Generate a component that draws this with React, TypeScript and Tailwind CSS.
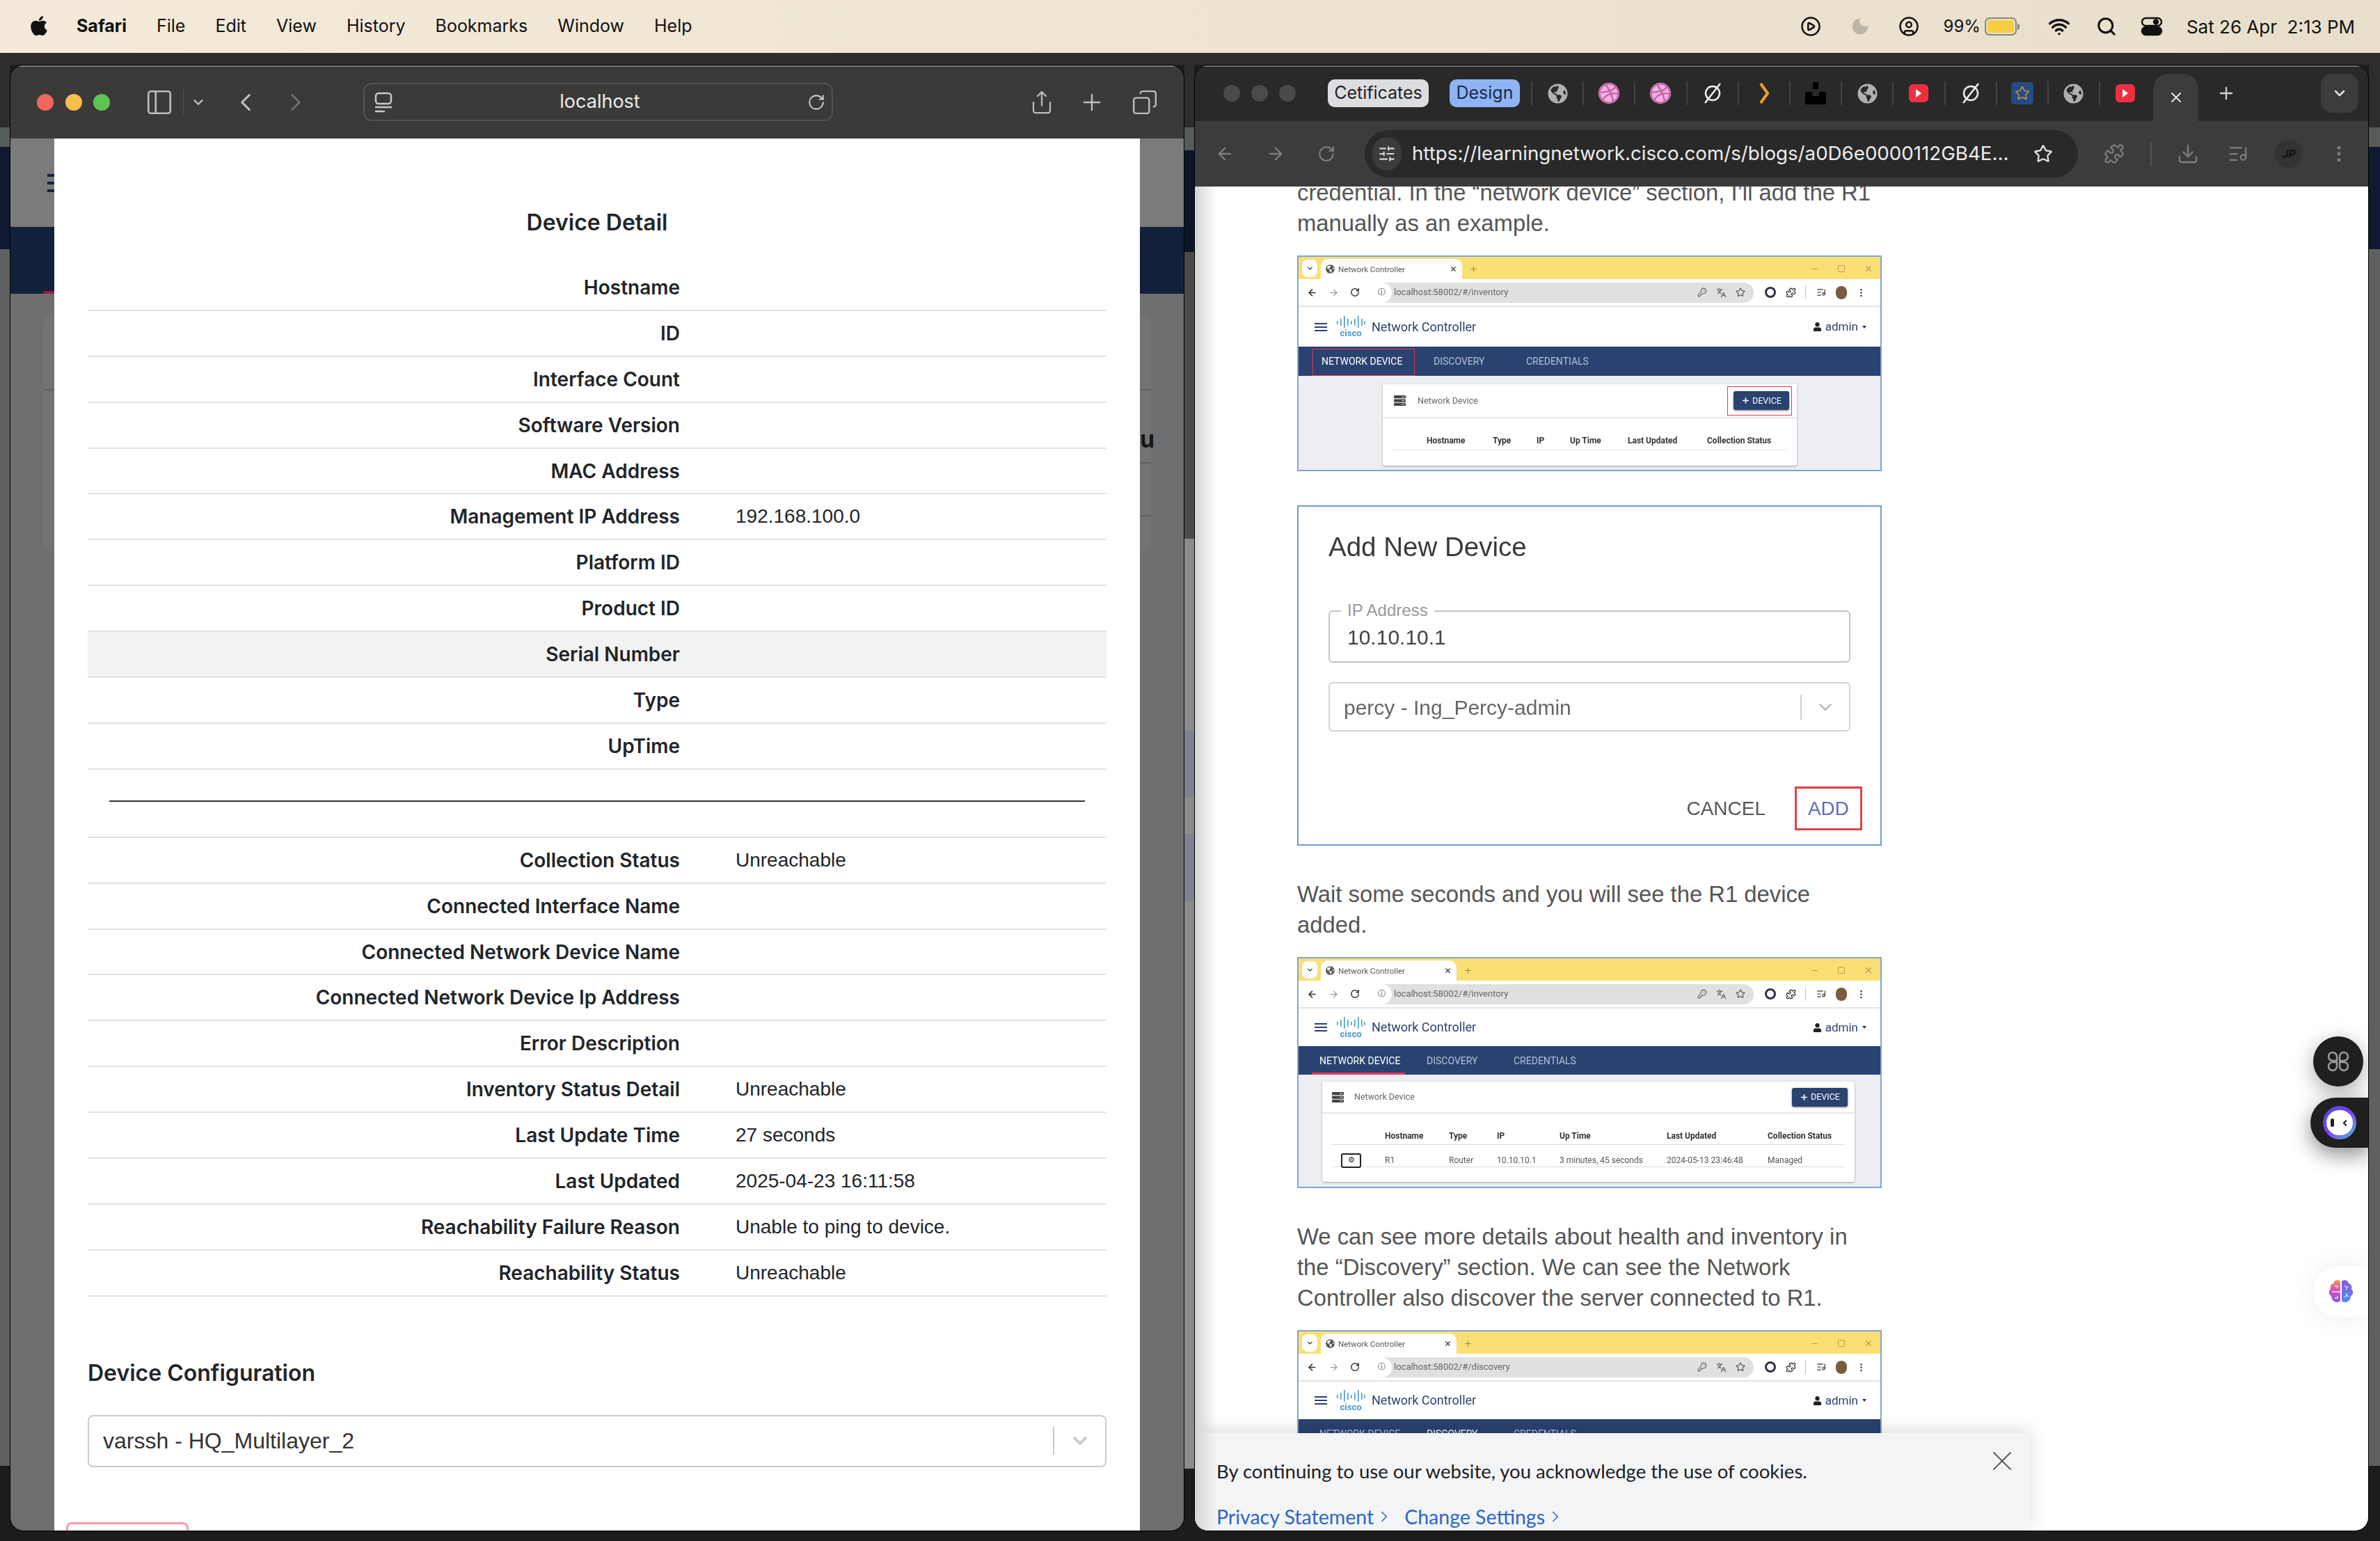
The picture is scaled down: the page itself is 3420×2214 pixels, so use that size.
import React from 'react';
import clsx from 'clsx';
import {
  ArrowLeft,
  ArrowRight,
  ChevronDown,
  ChevronLeft,
  ChevronRight,
  CirclePlay,
  CircleUser,
  Copy,
  Download,
  KeyRound,
  Languages,
  ListMusic,
  Minus,
  MoreVertical,
  PanelLeft,
  Plus,
  Puzzle,
  RotateCw,
  Search,
  Share,
  SlidersHorizontal,
  Square,
  Star,
  Wifi,
  X,
} from 'lucide-react';
import { FaApple, FaDribbble, FaGlobeAmericas, FaServer, FaUser } from 'react-icons/fa';

const topRows = [
  { label: 'Hostname' },
  { label: 'ID' },
  { label: 'Interface Count' },
  { label: 'Software Version' },
  { label: 'MAC Address' },
  { label: 'Management IP Address', value: '192.168.100.0' },
  { label: 'Platform ID' },
  { label: 'Product ID' },
  { label: 'Serial Number', highlight: true },
  { label: 'Type' },
  { label: 'UpTime' },
];

const bottomRows = [
  { label: 'Collection Status', value: 'Unreachable' },
  { label: 'Connected Interface Name' },
  { label: 'Connected Network Device Name' },
  { label: 'Connected Network Device Ip Address' },
  { label: 'Error Description' },
  { label: 'Inventory Status Detail', value: 'Unreachable' },
  { label: 'Last Update Time', value: '27 seconds' },
  { label: 'Last Updated', value: '2025-04-23 16:11:58' },
  { label: 'Reachability Failure Reason', value: 'Unable to ping to device.' },
  { label: 'Reachability Status', value: 'Unreachable' },
];

type RowProps = { label: string; value?: string; highlight?: boolean };

const DetailRow = ({ label, value, highlight }: RowProps) => (
  <div
    className={clsx(
      'flex h-[65.9px] items-center border-b-2 border-[#e2e2e2] text-[28px] text-[#212529]',
      highlight && 'bg-[#f2f2f2]',
    )}
  >
    <div className="w-[851px] text-right font-semibold">{label}</div>
    <div className="ml-[80px] font-['Liberation_Sans',sans-serif]">{value}</div>
  </div>
);

// the page behind the modal, seen left and right of it
const BackdropSide = ({ side }: { side: 'left' | 'right' }) => (
  <div className="flex w-[63px] shrink-0 flex-col">
    <div className="flex h-[127px] flex-col items-end gap-[7px] bg-[#7b7b7b] pt-[51px]">
      {side === 'left' && (
        <>
          <div className="h-[4px] w-[10px] bg-[#16233d]" />
          <div className="h-[4px] w-[10px] bg-[#16233d]" />
          <div className="h-[4px] w-[10px] bg-[#16233d]" />
        </>
      )}
    </div>
    <div className="flex h-[96px] items-end justify-end bg-[#13203a]">
      {side === 'left' && <div className="h-[4px] w-[16px] bg-[#8c1f3f]" />}
    </div>
    <div className="flex flex-1 flex-col bg-[#6d6e70] pt-[30px]">
      <div
        className={clsx(
          'h-[340px] w-[16px] bg-[#737373]',
          side === 'left' ? 'ml-auto rounded-l-[12px]' : 'rounded-r-[12px]',
        )}
      >
        <div className="h-[109px] border-b-2 border-[#5f5f5f]" />
        {side === 'right' && (
          <>
            <div className="h-[105px] border-b-2 border-[#5f5f5f] pt-[55px] text-[34px] leading-[30px] font-bold text-[#161616]">
              u
            </div>
            <div className="h-[76px] border-b-2 border-[#5f5f5f]" />
          </>
        )}
      </div>
    </div>
  </div>
);

const DeviceModal = () => (
  <div className="h-full w-[1560px] shrink-0 overflow-hidden bg-white px-[48px] pt-[99px]">
    <div className="h-[44px] text-center text-[32px] leading-[44px] font-semibold text-[#212529]">Device Detail</div>
    <div className="mt-[39px]">
      {topRows.map((row) => (
        <DetailRow key={row.label} {...row} />
      ))}
    </div>
    <div className="flex h-[98px] items-center border-b-2 border-[#e2e2e2] px-[31px]">
      <div className="mb-[6px] h-[2px] w-full bg-[#333]" />
    </div>
    {bottomRows.map((row) => (
      <DetailRow key={row.label} {...row} />
    ))}
    <div className="mt-[88px] h-[44px] text-[32px] leading-[44px] font-semibold text-[#212529]">Device Configuration</div>
    <div className="mt-[38px] flex h-[75px] items-center rounded-lg border-2 border-[#cccccc] pl-[20px] font-['Liberation_Sans',sans-serif] text-[32px] text-[#333]">
      <div className="flex-1">varssh - HQ_Multilayer_2</div>
      <div className="h-[40px] w-[2px] bg-[#cccccc]" />
      <div className="flex w-[73px] justify-center">
        <ChevronDown size={32} strokeWidth={3} className="text-[#cccccc]" />
      </div>
    </div>
    <div className="mt-[79px] -ml-[31px] h-[40px] w-[176px] rounded-lg border-[3px] border-[#f29cb0]" />
  </div>
);

const SafariWindow = () => (
  <div className="flex h-full w-[1688px] shrink-0 flex-col overflow-hidden rounded-[20px] border border-black">
    <div className="flex h-[105px] shrink-0 items-center bg-[#3b3a38] shadow-[inset_0_2px_0_#777]">
      <div className="ml-[38px] h-[24px] w-[24px] rounded-full bg-[#f0665c]" />
      <div className="ml-[17px] h-[24px] w-[24px] rounded-full bg-[#f6bd4f]" />
      <div className="ml-[16px] h-[24px] w-[24px] rounded-full bg-[#60c453]" />
      <PanelLeft size={42} strokeWidth={1.5} className="ml-[50px] text-[#bdbdbd]" />
      <div className="ml-[13px] h-[36px] w-px bg-[#555]" />
      <ChevronDown size={22} strokeWidth={2.5} className="ml-[10px] text-[#c4c4c4]" />
      <ChevronLeft size={42} strokeWidth={1.7} className="ml-[36px] text-[#c4c4c4]" />
      <ChevronRight size={42} strokeWidth={1.7} className="ml-[30px] text-[#6e6e6e]" />
      <div className="ml-[76px] flex h-[55px] w-[675px] items-center rounded-[12px] border-2 border-[#525252] pr-[9px] pl-[14px]">
        <svg width="26" height="30" viewBox="0 0 26 30" fill="none" stroke="#c8c8c8" strokeWidth="2.5" className="shrink-0">
          <rect x="2" y="2" width="22" height="15" rx="4" />
          <path d="M1 22h24M1 28h14" />
        </svg>
        <div className="flex-1 text-center text-[27px] text-[#ececec]">localhost</div>
        <RotateCw size={26} strokeWidth={1.7} className="shrink-0 text-[#cfcfcf]" />
      </div>
      <Share size={36} strokeWidth={1.5} className="ml-[282px] text-[#bdbdbd]" />
      <Plus size={38} strokeWidth={1.5} className="ml-[35px] text-[#bdbdbd]" />
      <Copy size={38} strokeWidth={1.5} className="ml-[38px] -scale-x-100 text-[#bdbdbd]" />
    </div>
    <div className="flex min-h-0 flex-1">
      <BackdropSide side="left" />
      <DeviceModal />
      <BackdropSide side="right" />
    </div>
  </div>
);

const CiscoLogo = () => (
  <div className="flex w-[42px] flex-col items-center">
    <svg width="42" height="20" viewBox="0 0 42 20" fill="#4a9ad4">
      <rect x="1" y="8" width="1.6" height="5" />
      <rect x="6" y="5" width="1.6" height="10" />
      <rect x="11" y="1" width="1.6" height="17" />
      <rect x="16" y="5" width="1.6" height="10" />
      <rect x="21" y="8" width="1.6" height="5" />
      <rect x="26" y="5" width="1.6" height="10" />
      <rect x="31" y="1" width="1.6" height="17" />
      <rect x="36" y="5" width="1.6" height="10" />
      <rect x="40" y="8" width="1.6" height="5" />
    </svg>
    <div className="-mt-[1px] text-[13px] leading-[14px] font-bold text-[#4a9ad4]">cisco</div>
  </div>
);

const DeviceButton = () => (
  <div className="flex h-[27px] w-[80px] items-center justify-center gap-[3px] rounded-[3px] bg-[#2a4270] text-[12.5px] text-white shadow-[0_1px_3px_rgba(0,0,0,0.5)]">
    <Plus size={13} strokeWidth={3} />
    DEVICE
  </div>
);

type ShotProps = {
  path: string;
  variant: 'first' | 'rest';
  active?: string;
  className: string;
  children?: React.ReactNode;
};

const navTabs = [
  { name: 'NETWORK DEVICE', first: 'w-[161px]', rest: 'w-[154px]' },
  { name: 'DISCOVERY', first: 'w-[133px]', rest: 'w-[125px]' },
  { name: 'CREDENTIALS', first: 'w-[100px]', rest: 'w-[100px]' },
];

// small pasted screenshot of the Network Controller app inside the blog post
const AppShot = ({ path, variant, active = 'NETWORK DEVICE', className, children }: ShotProps) => {
  const first = variant === 'first';
  return (
    <div className={clsx("flex w-[840px] flex-col overflow-hidden border-2 border-[#7fa5d6] bg-[#eceef2] font-['Roboto',sans-serif] blur-[0.4px]", className)}>
      <div className="flex h-[32px] shrink-0 items-end bg-[#fadf75]">
        <div className="mb-[3px] ml-[5px] flex h-[25px] w-[22px] items-center justify-center rounded-lg bg-white">
          <ChevronDown size={11} strokeWidth={3} className="text-[#333]" />
        </div>
        <div className={clsx('ml-[5px] flex h-[29px] items-center rounded-t-[10px] bg-white px-[7px] text-[11.5px] text-[#555]', first ? 'w-[203px]' : 'w-[195px]')}>
          <FaGlobeAmericas size={13} className="mr-[5px] text-[#555]" />
          <span className="flex-1">Network Controller</span>
          <X size={11} strokeWidth={2.5} className="text-[#333]" />
        </div>
        <Plus size={13} className="mb-[8px] ml-[10px] text-[#9b8a3a]" />
        <div className="mb-[8px] ml-auto flex items-center gap-[26px] pr-[10px] text-[#b3a04d]">
          <Minus size={13} />
          <Square size={12} />
          <X size={14} />
        </div>
      </div>
      <div className="flex h-[40px] shrink-0 items-center border-b-2 border-[#e4e4e4] bg-white pl-[12px] text-[#333]">
        <ArrowLeft size={15} strokeWidth={2.5} />
        <ArrowRight size={15} strokeWidth={2} className="ml-[16px] text-[#999]" />
        <RotateCw size={14} strokeWidth={2.5} className="ml-[16px]" />
        <div className="ml-[17px] flex h-[29px] w-[549px] items-center rounded-full bg-[#e0e0e0] pr-[12px] text-[13px] text-[#666]">
          <div className="flex h-[29px] w-[29px] items-center justify-center rounded-full bg-white text-[11px] text-[#333]">ⓘ</div>
          <span className="ml-[3px] flex-1">{path}</span>
          <KeyRound size={14} className="mr-[13px] text-[#666]" />
          <Languages size={15} className="mr-[13px] text-[#666]" />
          <Star size={14} className="text-[#555]" />
        </div>
        <div className="ml-[16px] h-[16px] w-[16px] rounded-full border-[3px] border-[#334]" />
        <Puzzle size={15} className="ml-[14px]" />
        <div className="ml-[13px] h-[20px] w-px bg-[#f0c14b]" />
        <ListMusic size={14} className="ml-[15px]" />
        <div className="ml-[14px] h-[19px] w-[16px] rounded-full bg-[#7a5c3d]" />
        <MoreVertical size={15} className="ml-[13px]" />
      </div>
      <div className={clsx('flex shrink-0 items-center bg-white pr-[20px] pl-[23px] text-[#2a4270]', first ? 'h-[57px]' : 'h-[54px]')}>
        <div className="flex w-[18px] flex-col gap-[3px]">
          <div className="h-[2px] bg-[#2a4270]" />
          <div className="h-[2px] bg-[#2a4270]" />
          <div className="h-[2px] bg-[#2a4270]" />
        </div>
        <div className="ml-[13px]">
          <CiscoLogo />
        </div>
        <div className="ml-[9px] text-[18px] leading-none">Network Controller</div>
        <FaUser size={13} className="ml-auto text-[#222]" />
        <div className="ml-[5px] text-[17px] leading-none">admin</div>
        <div className="ml-[6px] h-0 w-0 border-x-[3px] border-t-[4px] border-x-transparent border-t-[#333]" />
      </div>
      <div className={clsx('flex shrink-0 items-center bg-[#2a4270] text-[14px]', first ? 'relative h-[42px] pl-[33px]' : 'relative h-[41px] pl-[30px]')}>
        {navTabs.map((tab) => (
          <div key={tab.name} className={clsx(first ? tab.first : tab.rest, tab.name === active ? 'text-white' : 'text-[#b4c0d4]')}>
            {tab.name}
          </div>
        ))}
        {first ? (
          <div className="absolute top-[3px] bottom-0 left-[20px] w-[147px] border border-[#e23a4e]" />
        ) : (
          active === 'NETWORK DEVICE' && <div className="absolute bottom-0 left-[19px] h-[3px] w-[134px] bg-[#e23a5e]" />
        )}
      </div>
      <div className="min-h-0 flex-1">{children}</div>
    </div>
  );
};

const headCols = ['Hostname', 'Type', 'IP', 'Up Time', 'Last Updated', 'Collection Status'];

const FirstShotCard = () => (
  <div className="mt-[12px] ml-[121px] h-[117px] w-[595px] rounded-[3px] bg-white shadow-[0_1px_3px_rgba(0,0,0,0.35)]">
    <div className="relative flex h-[49px] items-center border-b-2 border-[#e8e8e8] pl-[16px] text-[12.5px] text-[#666]">
      <FaServer size={17} className="text-[#444]" />
      <span className="ml-[17px]">Network Device</span>
      <div className="ml-auto mr-[11px]">
        <DeviceButton />
      </div>
      <div className="absolute top-[3px] right-[7px] h-[42px] w-[93px] border border-[#e23a4e]" />
    </div>
    <div className="mx-[14px] grid h-[46px] grid-cols-[49px_95px_63px_48px_83px_114px_1fr] items-center border-b border-[#e4e4e4] pt-[10px] text-[12px] font-bold text-[#333]">
      <div />
      {headCols.map((col) => (
        <div key={col} className="whitespace-nowrap">{col}</div>
      ))}
    </div>
  </div>
);

const SecondShotCard = () => (
  <div className="mt-[10px] ml-[34px] h-[144px] w-[765px] rounded-[3px] bg-white shadow-[0_1px_3px_rgba(0,0,0,0.35)]">
    <div className="flex h-[46px] items-center border-b-2 border-[#e8e8e8] pl-[14px] text-[12.5px] text-[#666]">
      <FaServer size={17} className="text-[#444]" />
      <span className="ml-[15px]">Network Device</span>
      <div className="mr-[10px] ml-auto">
        <DeviceButton />
      </div>
    </div>
    <div className="mx-[14px] grid h-[45px] grid-cols-[76px_92px_69px_90px_154px_145px_1fr] items-center border-b border-[#dcdcdc] pt-[10px] text-[12px] font-bold text-[#333]">
      <div />
      {headCols.map((col) => (
        <div key={col} className="whitespace-nowrap">{col}</div>
      ))}
    </div>
    <div className="mx-[14px] grid h-[32px] grid-cols-[76px_92px_69px_90px_154px_145px_1fr] items-center border-b border-[#dcdcdc] text-[12px] text-[#555]">
      <div className="ml-[13px] flex h-[21px] w-[29px] items-center justify-center rounded-[3px] border-2 border-[#222] text-[11px] text-[#222]">⚙</div>
      <div>R1</div>
      <div>Router</div>
      <div>10.10.10.1</div>
      <div>3 minutes, 45 seconds</div>
      <div>2024-05-13 23:46:48</div>
      <div>Managed</div>
    </div>
  </div>
);

const AddDeviceBox = () => (
  <div className="mt-[49px] h-[489px] w-[840px] border-2 border-[#6f9bd6] px-[43px] pt-[34px] font-['Liberation_Sans',sans-serif] blur-[0.3px]">
    <div className="text-[38.5px] leading-[48px] text-[#3a3a3a]">Add New Device</div>
    <div className="relative mt-[67px] flex h-[75px] items-center rounded-[6px] border-2 border-[#c4c4c4] pl-[25px] text-[30px] text-[#444]">
      <div className="absolute -top-[16px] left-[16px] bg-white px-[9px] text-[24px] leading-[28px] text-[#999]">IP Address</div>
      <div className="pt-[3px]">10.10.10.1</div>
    </div>
    <div className="mt-[28px] flex h-[71px] items-center rounded-[6px] border-2 border-[#d4d4d4] pl-[20px] text-[30px] text-[#666]">
      <div className="flex-1 pt-[2px]">percy - Ing_Percy-admin</div>
      <div className="h-[36px] w-[2px] bg-[#cfcfcf]" />
      <div className="flex w-[68px] justify-center">
        <ChevronDown size={30} strokeWidth={2} className="text-[#bcbcbc]" />
      </div>
    </div>
    <div className="-mr-[17px] mt-[79px] flex items-center justify-end gap-[42px] text-[28px]">
      <div className="text-[#555]">CANCEL</div>
      <div className="flex h-[63px] w-[97px] items-center justify-center border-[3px] border-[#e0404a] text-[#5b6cc0]">ADD</div>
    </div>
  </div>
);

const BlackTile = () => (
  <svg width="32" height="32" viewBox="0 0 32 32" fill="#000">
    <rect x="12" y="0" width="8" height="10" />
    <path d="M1 14h10v6h10v-6h10v18H1z" />
  </svg>
);

const SlashCircle = () => (
  <svg width="30" height="32" viewBox="0 0 30 32" fill="none" stroke="#eee" strokeWidth="2.5">
    <circle cx="15" cy="16" r="10" />
    <path d="M26 2 4 30" />
  </svg>
);

const Youtube = () => (
  <div className="flex h-[26px] w-[28px] items-center justify-center rounded-[6px] bg-[#ec3040]">
    <div className="h-0 w-0 border-y-[6px] border-l-[8px] border-y-transparent border-l-white" />
  </div>
);

const GlobeIcon = () => <FaGlobeAmericas size={29} className="text-[#b0b0b0]" />;
const Dribbble = () => (
  <div className="rounded-full bg-[#f2b0de]">
    <FaDribbble size={30} className="text-[#c45fa5]" />
  </div>
);

const tabIcons = [
  <GlobeIcon key="a" />,
  <Dribbble key="b" />,
  <Dribbble key="c" />,
  <SlashCircle key="d" />,
  <svg key="e" width="20" height="32" viewBox="0 0 20 32" fill="none" stroke="#eaa033" strokeWidth="4">
    <path d="M5 2l10 14L5 30" />
  </svg>,
  <BlackTile key="f" />,
  <GlobeIcon key="g" />,
  <Youtube key="h" />,
  <SlashCircle key="i" />,
  <div key="j" className="flex h-[32px] w-[32px] items-center justify-center rounded-[5px] bg-[#234c84]">
    <Star size={22} strokeWidth={1.6} className="text-[#d9963a]" />
  </div>,
  <GlobeIcon key="k" />,
  <Youtube key="l" />,
];

const ChromeTabs = () => (
  <div className="flex h-[80px] shrink-0 items-center bg-[#292929] pl-[41px] shadow-[inset_0_2px_0_#6a6a6a]">
    <div className="h-[24px] w-[24px] rounded-full bg-[#4a4a4a]" />
    <div className="ml-[16px] h-[24px] w-[24px] rounded-full bg-[#4a4a4a]" />
    <div className="ml-[16px] h-[24px] w-[24px] rounded-full bg-[#4a4a4a]" />
    <div className="ml-[46px] flex h-[40px] w-[145px] items-center justify-center rounded-[10px] bg-[#dcdde1] text-[25px] text-[#222]">Cetificates</div>
    <div className="ml-[30px] flex h-[40px] w-[101px] items-center justify-center rounded-[10px] bg-[#8fb4f5] text-[25px] text-[#1d2b44]">Design</div>
    <div className="ml-[16px] flex">
      {tabIcons.map((icon, index) => (
        <div key={index} className="flex h-[34px] w-[74.2px] items-center justify-center border-l-2 border-[#444]">
          {icon}
        </div>
      ))}
    </div>
    <div className="ml-[4px] flex h-[68px] w-[65px] items-center justify-center self-end rounded-t-[22px] bg-[#3c3c3c]">
      <X size={24} strokeWidth={2} className="text-[#e6e6e6]" />
    </div>
    <Plus size={28} strokeWidth={2} className="ml-[26px] text-[#cfcfcf]" />
    <div className="ml-[122px] flex h-[56px] w-[54px] items-center justify-center rounded-[16px] bg-[#3c3c3c]">
      <ChevronDown size={24} strokeWidth={2.5} className="text-[#dedede]" />
    </div>
  </div>
);

const ChromeToolbar = () => (
  <div className="flex h-[94px] shrink-0 items-center bg-[#3c3c3c] pl-[29px] text-[#7c7c7c]">
    <ArrowLeft size={28} strokeWidth={2} />
    <ArrowRight size={28} strokeWidth={2} className="ml-[45px]" />
    <RotateCw size={26} strokeWidth={2} className="ml-[46px]" />
    <div className="ml-[42px] flex h-[68px] w-[1025px] items-center rounded-full bg-[#292929] pl-[11px]">
      <div className="flex h-[48px] w-[42px] items-center justify-center rounded-full bg-[#3c3c3c]">
        <SlidersHorizontal size={26} strokeWidth={2} className="text-[#d6d6d6]" />
      </div>
      <div className="ml-[15px] w-[862px] whitespace-nowrap text-[27.7px] text-[#ececec]">
        https://learningnetwork.cisco.com/s/blogs/a0D6e0000112GB4E...
      </div>
      <Star size={28} strokeWidth={2} className="ml-[31px] text-[#e0e0e0]" />
    </div>
    <Puzzle size={30} strokeWidth={1.8} className="ml-[37px]" />
    <div className="ml-[37px] h-[34px] w-[2px] bg-[#555]" />
    <Download size={32} strokeWidth={1.8} className="ml-[36px]" />
    <ListMusic size={30} strokeWidth={1.8} className="ml-[41px]" />
    <div className="ml-[38px] flex h-[40px] w-[40px] items-center justify-center rounded-full bg-[#333] text-[16px] font-bold italic text-[#111]">JP</div>
    <MoreVertical size={30} strokeWidth={2} className="ml-[37px]" />
  </div>
);

const FloatingWidgets = () => (
  <>
    <div className="absolute top-[1221px] right-[7px] flex h-[72px] w-[72px] items-center justify-center rounded-full bg-[#1f1f1f] shadow-[0_8px_30px_rgba(0,0,0,0.35)]">
      <svg width="32" height="32" viewBox="0 0 32 32" fill="none" stroke="#9a9a9a" strokeWidth="2.5">
        <path d="M15 15H8a6 6 0 1 1 6-6v6zM17 15h7a6 6 0 1 0-6-6v6zM15 17H8a6 6 0 1 0 6 6v-6zM17 17h7a6 6 0 1 1-6 6v-6z" />
      </svg>
    </div>
    <div className="absolute top-[1309px] -right-[1px] flex h-[72px] w-[84px] items-center rounded-l-full bg-[#1f1f1f] pl-[18px] shadow-[0_10px_30px_rgba(0,0,0,0.45)]">
      <div className="flex h-[48px] w-[48px] items-center justify-center rounded-full bg-linear-to-br from-[#4a49e6] via-[#7a3ff0] to-[#36b6c8]">
        <div className="flex h-[36px] w-[38px] items-center justify-center gap-[9px] rounded-full bg-white">
          <div className="h-[12px] w-[5px] rounded-full bg-[#1f1f1f]" />
          <ChevronLeft size={13} strokeWidth={4} className="text-[#1f1f1f]" />
        </div>
      </div>
    </div>
    <div className="absolute top-[1552px] -right-[1px] flex h-[72px] w-[80px] items-center rounded-l-full bg-white pl-[21px] shadow-[0_0_40px_rgba(0,0,0,0.08)]">
      <svg width="38" height="36" viewBox="0 0 38 36">
        <defs>
          <linearGradient id="brainLeft" x1="0" y1="0" x2="0" y2="1">
            <stop offset="0" stopColor="#f09a3e" />
            <stop offset="0.45" stopColor="#d94fc0" />
            <stop offset="1" stopColor="#8a56e0" />
          </linearGradient>
          <linearGradient id="brainRight" x1="0" y1="0" x2="0" y2="1">
            <stop offset="0" stopColor="#8a56e0" />
            <stop offset="1" stopColor="#4d8ef0" />
          </linearGradient>
        </defs>
        <path d="M18 3c-3-3-9-2-10 3-4 1-5 5-4 8-3 3-3 8 1 10 0 5 4 9 8 9 3 0 5-1 5-3z" fill="url(#brainLeft)" />
        <path d="M20 3c3-3 9-2 10 3 4 1 5 5 4 8 3 3 3 8-1 10 0 5-4 9-8 9-3 0-5-1-5-3z" fill="url(#brainRight)" />
        <path d="M6 18h12M10 10h4v3M10 27h4v-3M24 9l3 3 3-2M27 12v3M24 26l3-3 3 2M27 23v-3" stroke="#f4e8ff" strokeWidth="1.3" fill="none" />
      </svg>
    </div>
  </>
);

const CookieBanner = () => (
  <div className="absolute bottom-0 left-0 h-[140px] w-[1200px] bg-[#f3f4f6] pl-[31px] font-['Lato',sans-serif] shadow-[0_-4px_24px_rgba(0,0,0,0.14)]">
    <div className="pt-[37px] text-[27.5px] leading-[36px] text-[#1d1d1d]">By continuing to use our website, you acknowledge the use of cookies.</div>
    <div className="mt-[29px] flex items-center text-[28.5px] leading-[36px] text-[#2b66c9]">
      <span>Privacy Statement</span>
      <ChevronRight size={26} strokeWidth={1.4} className="ml-[2px]" />
      <span className="ml-[16px]">Change Settings</span>
      <ChevronRight size={26} strokeWidth={1.4} className="ml-[2px]" />
    </div>
    <X size={48} strokeWidth={0.9} className="absolute top-[16px] right-[16px] text-[#555]" />
  </div>
);

const BlogWindow = () => (
  <div className="flex h-full w-[1688px] shrink-0 flex-col overflow-hidden rounded-[20px] border border-black">
    <ChromeTabs />
    <ChromeToolbar />
    <div className="relative min-h-0 flex-1 overflow-hidden bg-white">
      <div className="-mt-[13px] pl-[147px] font-['Liberation_Sans',sans-serif] text-[32.8px] leading-[44px] text-[#555]">
        <p className="whitespace-nowrap">credential. In the “network device” section, I’ll add the R1</p>
        <p>manually as an example.</p>
        <div className="mt-[24px]">
          <AppShot path="localhost:58002/#/inventory" variant="first" className="h-[310px]">
            <FirstShotCard />
          </AppShot>
        </div>
        <AddDeviceBox />
        <p className="mt-[48px] w-[840px]">Wait some seconds and you will see the R1 device added.</p>
        <div className="mt-[24px]">
          <AppShot path="localhost:58002/#/inventory" variant="rest" className="h-[332px]">
            <SecondShotCard />
          </AppShot>
        </div>
        <p className="mt-[48px] w-[840px]">
          We can see more details about health and inventory in the “Discovery” section. We can see the Network
          Controller also discover the server connected to R1.
        </p>
        <div className="mt-[24px]">
          <AppShot path="localhost:58002/#/discovery" variant="rest" active="DISCOVERY" className="h-[300px]" />
        </div>
      </div>
      <FloatingWidgets />
      <CookieBanner />
      <div className="absolute inset-y-0 left-0 w-[32px] bg-linear-to-r from-[#d4d4d4] to-transparent" />
    </div>
  </div>
);

// slivers of the desktop and the window underneath, between and beside the two windows
const OuterStrip = ({ className }: { className: string }) => (
  <div className={clsx('flex shrink-0 flex-col', className)}>
    <div className="h-[107px] bg-[#2d2d2d]" />
    <div className="h-[28px] bg-[#565b5b]" />
    <div className="h-[147px] bg-[#0f1930]" />
    <div className="h-[1748px] bg-[#5f6062]" />
    <div className="flex-1 bg-[#1c1c1c]" />
  </div>
);

const GapStrip = () => (
  <div className="flex w-[14px] shrink-0 flex-col">
    <div className="h-[107px] bg-[#2d2d2d]" />
    <div className="h-[33px] bg-[#555c5c]" />
    <div className="h-[146px] bg-[#0d1628]" />
    <div className="h-[412px] bg-[#4b4b4b]" />
    <div className="h-[275px] bg-[#8b8b8b]" />
    <div className="h-[97px] bg-[#7e8290]" />
    <div className="h-[52px] bg-[#8b8b8b]" />
    <div className="h-[97px] bg-[#7e8290]" />
    <div className="h-[815px] bg-[#8b8b8b]" />
    <div className="flex-1 bg-[#1c1c1c]" />
  </div>
);

const MenuBar = () => (
  <div className="flex h-[76px] shrink-0 items-center bg-linear-to-r from-[#f3ead9] to-[#e7dfcb] pr-[36px] pl-[40px] text-[25px] text-[#111]">
    <FaApple size={32} className="-mt-[3px]" />
    <div className="ml-[38px] flex gap-[43px]">
      <span className="font-bold">Safari</span>
      <span>File</span>
      <span>Edit</span>
      <span>View</span>
      <span>History</span>
      <span>Bookmarks</span>
      <span>Window</span>
      <span>Help</span>
    </div>
    <CirclePlay size={30} strokeWidth={2} className="ml-auto" />
    <svg width="30" height="30" viewBox="0 0 24 24" fill="#bdb5a5" className="ml-[41px]">
      <path d="M12 3a9 9 0 1 0 9 9c0-.5 0-1-.1-1.4A6 6 0 0 1 12 3z" />
    </svg>
    <CircleUser size={30} strokeWidth={2} className="ml-[40px]" />
    <span className="ml-[35px] text-[24px]">99%</span>
    <div className="ml-[6px] flex items-center">
      <div className="h-[26px] w-[46px] rounded-[7px] border-2 border-[#8c8778] p-[2px]">
        <div className="h-full w-full rounded-[3px] bg-[#f8cf44]" />
      </div>
      <div className="ml-[1px] h-[9px] w-[3px] rounded-r bg-[#8c8778]" />
    </div>
    <Wifi size={32} strokeWidth={2.6} className="ml-[41px]" />
    <Search size={30} strokeWidth={2.4} className="ml-[37px]" />
    <svg width="32" height="28" viewBox="0 0 32 28" fill="none" stroke="#111" strokeWidth="2.4" className="ml-[34px]">
      <rect x="2" y="2" width="28" height="11" rx="5.5" />
      <circle cx="22" cy="7.5" r="3" fill="#111" />
      <rect x="2" y="15" width="28" height="11" rx="5.5" fill="#111" />
    </svg>
    <span className="ml-[34px] text-[26px] whitespace-pre">Sat 26 Apr  2:13 PM</span>
  </div>
);

export default function App() {
  return (
    <div className="flex h-[2214px] w-[3420px] flex-col overflow-hidden bg-[#1c1c1c] font-['Inter',sans-serif]">
      <MenuBar />
      <div className="flex min-h-0 flex-1">
        <OuterStrip className="w-[14px]" />
        <div className="flex w-[1688px] shrink-0 flex-col">
          <div className="h-[17px] bg-[#2d2d2d]" />
          <div className="min-h-0 flex-1">
            <SafariWindow />
          </div>
          <div className="h-[14px] bg-[#1c1c1c]" />
        </div>
        <GapStrip />
        <div className="flex w-[1688px] shrink-0 flex-col">
          <div className="h-[17px] bg-[#2d2d2d]" />
          <div className="min-h-0 flex-1">
            <BlogWindow />
          </div>
          <div className="h-[14px] bg-[#1c1c1c]" />
        </div>
        <OuterStrip className="w-[16px]" />
      </div>
    </div>
  );
}
